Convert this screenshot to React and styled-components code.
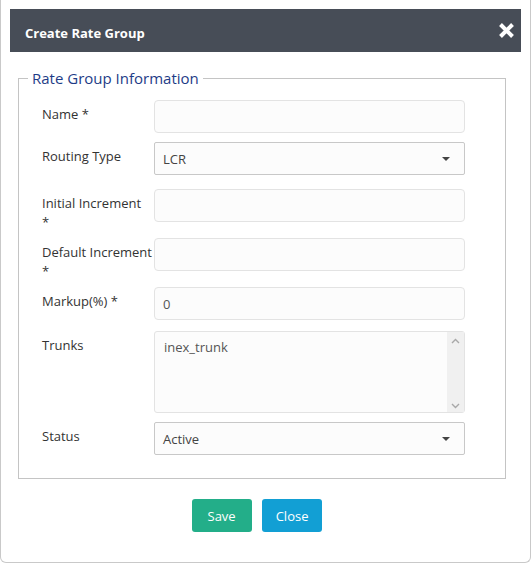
import styled, { createGlobalStyle } from 'styled-components';

const Global = createGlobalStyle`
  html, body { margin: 0; padding: 0; background: #fff; }
  body { font-family: "Open Sans", "Liberation Sans", sans-serif; }
  * { box-sizing: border-box; }
`;

const Modal = styled.div`
  width: 531px;
  height: 563px;
  border: 1px solid #c9c9c9;
  border-top: none;
  border-radius: 0 0 6px 6px;
  padding: 9px 9px 0 9px;
  background: #fff;
`;

const Header = styled.div`
  height: 43px;
  background: #474d57;
  display: flex;
  align-items: center;
  justify-content: space-between;
  padding: 4px 6px 0 15px;
`;

const Title = styled.h4`
  margin: 0;
  color: #fff;
  font-size: 13px;
  font-weight: 700;
`;

const CloseIcon = styled.svg`
  width: 17px;
  height: 17px;
  margin-top: -5px;
`;

const Fieldset = styled.fieldset`
  margin: 17px 15px 0 8px;
  padding: 13px 40px 23px 23px;
  border: 1px solid #c4c4c4;
  min-width: 0;
`;

const Legend = styled.legend`
  margin-left: -14px;
  padding: 0 4px;
  font-size: 15px;
  line-height: 18px;
  color: #1e3c87;
`;

const Row = styled.div`
  display: grid;
  grid-template-columns: 112px 311px;
  align-items: start;
  margin-bottom: ${p => p.$gap}px;
`;

const Label = styled.label`
  padding-top: 5px;
  font-size: 13px;
  line-height: 19px;
  color: #333;
  white-space: nowrap;
`;

const Input = styled.div`
  height: 33px;
  border: 1px solid #e3e3e3;
  border-radius: 4px;
  background: #fcfcfc;
  display: flex;
  align-items: center;
  padding: 0 8px;
  font-size: 13px;
  color: #555;
`;

const Select = styled(Input)`
  border-color: #c8c8c8;
  border-radius: 2px;
  justify-content: space-between;
  padding: 0 14px 0 8px;
  color: #444;
`;

const Caret = styled.span`
  width: 0;
  height: 0;
  border-left: 4px solid transparent;
  border-right: 4px solid transparent;
  border-top: 4px solid #444;
`;

const ListBox = styled.div`
  height: 82px;
  border: 1px solid #e3e3e3;
  border-radius: 3px;
  background: #fcfcfc;
  display: flex;
`;

const ListItems = styled.div`
  flex: 1;
  padding: 6px 9px;
  font-size: 13px;
  line-height: 18px;
  color: #555;
`;

const Track = styled.div`
  width: 17px;
  background: #f0f0f0;
  display: flex;
  flex-direction: column;
  justify-content: space-between;
  align-items: center;
  padding: 6px 0 3px;
`;

const Footer = styled.div`
  display: flex;
  justify-content: center;
  gap: 10px;
  margin-top: 20px;
  padding-right: 17px;
`;

const Button = styled.button`
  height: 33px;
  padding: 0 ${p => p.$pad}px;
  border: none;
  border-radius: 3px;
  background: ${p => p.$bg};
  color: #fff;
  font-family: "Open Sans", "Liberation Sans", sans-serif;
  font-size: 13px;
`;

const Chevron = ({ up }) => (
  <svg width="9" height="6" viewBox="0 0 9 6">
    <path d={up ? 'M1 5 L4.5 1.5 L8 5' : 'M1 1 L4.5 4.5 L8 1'} fill="none" stroke="#a8a8a8" strokeWidth="1.4" />
  </svg>
);

export default function App() {
  return (
    <>
      <Global />
      <Modal>
        <Header>
          <Title>Create Rate Group</Title>
          <CloseIcon viewBox="0 0 17 17">
            <path d="M2.5 2.5 L14.5 14.5 M14.5 2.5 L2.5 14.5" stroke="#fff" strokeWidth="4" strokeLinecap="butt" />
          </CloseIcon>
        </Header>
        <Fieldset>
          <Legend>Rate Group Information</Legend>
          <Row $gap={9}>
            <Label>Name *</Label>
            <Input />
          </Row>
          <Row $gap={14}>
            <Label>Routing Type</Label>
            <Select>LCR<Caret /></Select>
          </Row>
          <Row $gap={6}>
            <Label>Initial Increment<br />*</Label>
            <Input />
          </Row>
          <Row $gap={6}>
            <Label>Default Increment<br />*</Label>
            <Input />
          </Row>
          <Row $gap={11}>
            <Label>Markup(%) *</Label>
            <Input>0</Input>
          </Row>
          <Row $gap={9}>
            <Label>Trunks</Label>
            <ListBox>
              <ListItems>inex_trunk</ListItems>
              <Track>
                <Chevron up />
                <Chevron />
              </Track>
            </ListBox>
          </Row>
          <Row $gap={0}>
            <Label>Status</Label>
            <Select>Active<Caret /></Select>
          </Row>
        </Fieldset>
        <Footer>
          <Button $bg="#23ae89" $pad={16}>Save</Button>
          <Button $bg="#129fd4" $pad={14}>Close</Button>
        </Footer>
      </Modal>
    </>
  );
}
